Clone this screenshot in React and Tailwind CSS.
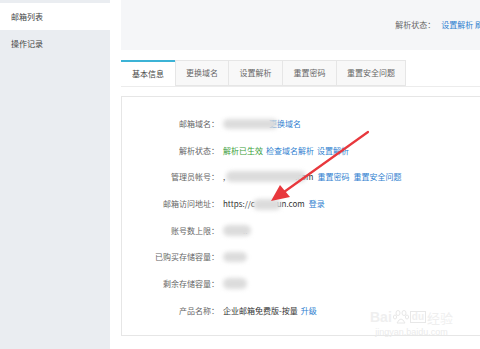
import React from "react";

const font = { fontFamily: '"Noto Sans CJK SC", "Noto Sans", sans-serif' };

function Blob({ className }) {
  return <span className={"absolute rounded-full bg-[#dcdcdc] blur-[2px] " + className} />;
}

function Row({ label, children }) {
  return (
    <div className="flex items-center h-[26.7px]">
      <div className="w-[97px] text-right text-[#666]">{label}</div>
      <div className="ml-[4px] flex items-center relative text-[#333] whitespace-nowrap">{children}</div>
    </div>
  );
}

export default function App() {
  return (
    <div className="relative flex w-[480px] h-[349px] overflow-hidden bg-white text-[8px] leading-none" style={font}>
      <aside className="w-[110px] shrink-0 bg-[#eaedf1] pt-[3px]">
        <div className="h-[27px] bg-white flex items-center pl-[11px] text-[#444]">邮箱列表</div>
        <div className="h-[27px] flex items-center pl-[11px] text-[#444]">操作记录</div>
      </aside>

      <main className="flex-1 pl-[11px] flex flex-col">
        <div className="h-[50px] bg-[#f5f6f8] flex items-center justify-end shrink-0">
          <div className="flex items-center -mr-[11px] whitespace-nowrap">
            <span className="text-[#666]">解析状态：</span>
            <span className="ml-[6px] text-[#2f7fd0]">设置解析 刷新</span>
          </div>
        </div>

        <div className="mt-[10px] h-[27px] flex border-b border-[#ececec] shrink-0">
          <div className="w-[54px] bg-white border-t-2 border-[#3cb3d6] flex items-center justify-center text-[#444]">基本信息</div>
          <div className="w-[54px] bg-[#f8f8f8] border border-[#e6e6e6] flex items-center justify-center text-[#666]">更换域名</div>
          <div className="w-[54px] bg-[#f8f8f8] border border-l-0 border-[#e6e6e6] flex items-center justify-center text-[#666]">设置解析</div>
          <div className="w-[54px] bg-[#f8f8f8] border border-l-0 border-[#e6e6e6] flex items-center justify-center text-[#666]">重置密码</div>
          <div className="w-[69px] bg-[#f8f8f8] border border-l-0 border-[#e6e6e6] flex items-center justify-center text-[#666]">重置安全问题</div>
        </div>

        <div className="mt-[9px] h-[240px] border border-r-0 border-[#e6e6e6] pt-[13.6px] shrink-0">
          <Row label="邮箱域名：">
            <span className="w-[46px]" />
            <span className="text-[#2f7fd0]">更换域名</span>
            <Blob className="left-0 top-[-1px] w-[55px] h-[10px]" />
          </Row>
          <Row label="解析状态：">
            <span className="text-[#3a9e3a]">解析已生效</span>
            <span className="ml-[3px] text-[#2f7fd0]">检查域名解析</span>
            <span className="ml-[3px] text-[#2f7fd0]">设置解析</span>
          </Row>
          <Row label="管理员帐号：">
            <span>,</span>
            <span className="w-[70px]" />
            <span>.com</span>
            <span className="ml-[4px] text-[#2f7fd0]">重置密码</span>
            <span className="ml-[4px] text-[#2f7fd0]">重置安全问题</span>
            <Blob className="left-[3px] top-[-2px] w-[80px] h-[11px]" />
          </Row>
          <Row label="邮箱访问地址：">
            <span>https://c</span>
            <span className="w-[22px]" />
            <span>un.com</span>
            <span className="ml-[4px] text-[#2f7fd0]">登录</span>
            <Blob className="left-[30px] top-[-1px] w-[28px] h-[11px]" />
          </Row>
          <Row label="账号数上限：">
            <span className="w-[20px]" />
            <span className="text-[#999]">..</span>
            <Blob className="left-0 top-[-2px] w-[28px] h-[11px]" />
          </Row>
          <Row label="已购买存储容量：">
            <span className="w-[24px] h-[8px]" />
            <Blob className="left-0 top-[-1px] w-[24px] h-[10px]" />
          </Row>
          <Row label="剩余存储容量：">
            <span className="w-[24px] h-[8px]" />
            <Blob className="left-0 top-[-2px] w-[24px] h-[11px]" />
          </Row>
          <Row label="产品名称：">
            <span>企业邮箱免费版-按量</span>
            <span className="ml-[3px] text-[#2f7fd0]">升级</span>
          </Row>
        </div>
      </main>

      {/* red arrow annotation */}
      <svg className="absolute left-0 top-0 pointer-events-none" width="480" height="349">
        <line x1="368" y1="132" x2="284" y2="192" stroke="#e8383d" strokeWidth="2.2" strokeLinecap="round" />
        <polygon points="271,201 280,185 290,197" fill="#e8383d" />
      </svg>

      {/* watermark */}
      <div className="absolute left-[370px] top-[309px] flex flex-col items-center pointer-events-none" style={{ fontFamily: '"Liberation Sans", "Noto Sans CJK SC", sans-serif' }}>
        <div className="flex items-center gap-[1px] text-[14px] font-bold text-[#efefef] leading-none">
          <span>Bai</span>
          <svg width="16" height="16" viewBox="0 0 16 16">
            <g fill="none" stroke="#e8e8e8" strokeWidth="1">
              <ellipse cx="5" cy="4" rx="2" ry="2.5" />
              <ellipse cx="11" cy="4" rx="2" ry="2.5" />
              <ellipse cx="2" cy="8" rx="1.6" ry="2" />
              <ellipse cx="14" cy="8" rx="1.6" ry="2" />
              <path d="M4 14 Q8 6 12 14 Z" />
            </g>
          </svg>
          <span className="text-[10px] border border-[#e8e8e8] px-[1px]">du</span>
          <span className="text-[13px] font-normal" style={font}>经验</span>
        </div>
        <div className="mt-[3px] text-[9px] text-[#ebebeb] leading-none">jingyan.baidu.com</div>
      </div>
    </div>
  );
}
